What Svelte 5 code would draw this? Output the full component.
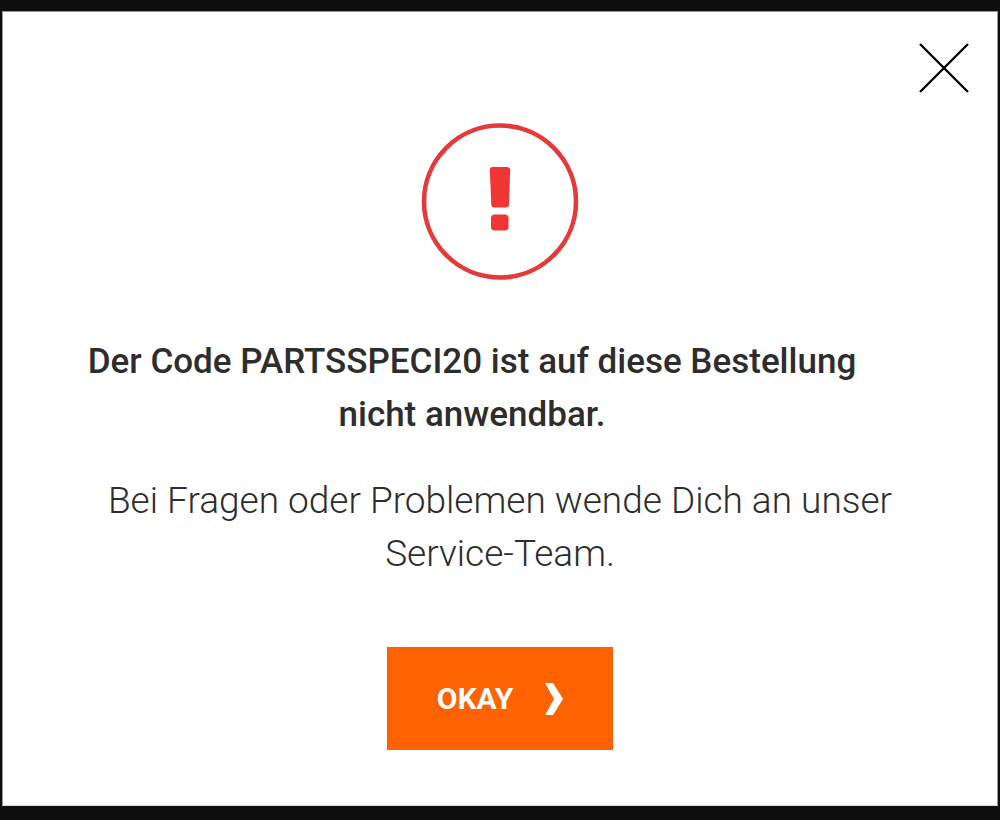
<script lang="ts">
  let { code = 'PARTSSPECI20' }: { code?: string } = $props()
  let open = $state(true)

  function close() {
    open = false
  }
</script>

<svelte:window
  onkeydown={e => {
    if (e.key === 'Escape') close()
  }}
/>

<div class="backdrop">
  {#if open}
    <div class="dialog" role="alertdialog" aria-modal="true" aria-labelledby="title" aria-describedby="hint">
      <button class="close" type="button" aria-label="Schließen" onclick={close}>
        <svg viewBox="0 0 50 50" width="50" height="50" aria-hidden="true">
          <path d="M1 1 49 49M49 1 1 49" fill="none" stroke="#000" stroke-width="2.3" />
        </svg>
      </button>
      <svg class="warning" viewBox="0 0 158 158" width="158" height="158" aria-hidden="true">
        <circle cx="79" cy="78.5" r="76" fill="none" stroke="#e63a3a" stroke-width="4.6" />
        <path
          d="M71.500 44h14.500q3.300 0 3.200 3.200l-1.200 34.300q-.1 3-3.200 3H73.500q-3.100 0-3.200-3l-1.500-34.300q0-3.200 2.700-3.200Z"
          fill="#f03535"
        />
        <rect x="70" y="91.500" width="17.500" height="16" rx="3.500" fill="#f03535" />
      </svg>
      <h2 id="title">Der Code {code} ist auf diese Bestellung nicht anwendbar.</h2>
      <p id="hint">Bei Fragen oder Problemen wende Dich an unser Service-Team.</p>
      <button class="okay" type="button" onclick={close}>
        <span>OKAY</span>
        <svg viewBox="0 0 18 32" width="18" height="32" aria-hidden="true">
          <path d="M0 0h8l10 16L8 32H0l9-16Z" fill="#fff" />
        </svg>
      </button>
    </div>
  {/if}
</div>

<style>
  :global(body) {
    margin: 0;
    background: #0e0e0e;
  }

  .backdrop {
    box-sizing: border-box;
    min-height: 100vh;
    padding: 11px 2px 14px;
    background: #0e0e0e;
    font-family: Roboto, 'Liberation Sans', sans-serif;
  }

  .dialog {
    position: relative;
    box-sizing: border-box;
    display: flex;
    flex-direction: column;
    align-items: center;
    padding: 111px 84px 55px;
    border: 1px solid #999;
    border-bottom-color: #ddd;
    background: #fff;
    color: #2d2d2d;
    text-align: center;
  }

  .close {
    position: absolute;
    top: 31px;
    right: 28px;
    display: flex;
    padding: 0;
    border: 0;
    background: none;
    cursor: pointer;
  }

  .warning {
    display: block;
  }

  h2 {
    box-sizing: border-box;
    width: 100%;
    margin: 54px 0 0;
    padding-right: 56px;
    font-size: 35px;
    font-weight: 500;
    line-height: 53px;
  }

  p {
    margin: 33px 0 0;
    font-size: 37px;
    font-weight: 300;
    line-height: 53px;
  }

  .okay {
    display: flex;
    align-items: center;
    gap: 32px;
    margin-top: 67px;
    padding: 25px 50px;
    border: 0;
    background: #ff6200;
    color: #fff;
    font-family: inherit;
    font-size: 30px;
    font-weight: 700;
    line-height: 53px;
    cursor: pointer;
  }
</style>
